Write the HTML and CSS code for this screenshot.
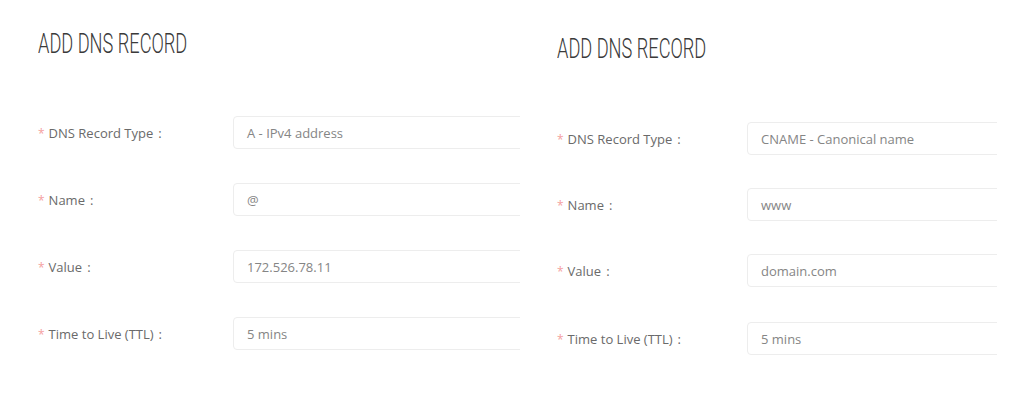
FILE: index.html
```html
<!DOCTYPE html>
<html>
<head>
<meta charset="utf-8">
<link rel="stylesheet" href="styles.css">
</head>
<body>
<div class="page">
  <section class="panel panel-left">
    <h2 class="title">ADD DNS RECORD</h2>
    <div class="form">
      <div class="row"><label class="label"><span class="req">*</span>DNS Record Type<span class="colon">:</span></label><div class="field">A - IPv4 address</div></div>
      <div class="row"><label class="label"><span class="req">*</span>Name<span class="colon">:</span></label><div class="field">@</div></div>
      <div class="row"><label class="label"><span class="req">*</span>Value<span class="colon">:</span></label><div class="field">172.526.78.11</div></div>
      <div class="row"><label class="label"><span class="req">*</span>Time to Live (TTL)<span class="colon">:</span></label><div class="field">5 mins</div></div>
    </div>
  </section>
  <section class="panel panel-right">
    <h2 class="title">ADD DNS RECORD</h2>
    <div class="form">
      <div class="row"><label class="label"><span class="req">*</span>DNS Record Type<span class="colon">:</span></label><div class="field">CNAME - Canonical name</div></div>
      <div class="row"><label class="label"><span class="req">*</span>Name<span class="colon">:</span></label><div class="field">www</div></div>
      <div class="row"><label class="label"><span class="req">*</span>Value<span class="colon">:</span></label><div class="field">domain.com</div></div>
      <div class="row row-last"><label class="label"><span class="req">*</span>Time to Live (TTL)<span class="colon">:</span></label><div class="field">5 mins</div></div>
    </div>
  </section>
</div>
</body>
</html>
```
FILE: styles.css
```css
html, body {
  margin: 0;
  padding: 0;
  background: #fff;
}
.page {
  display: flex;
  width: 1024px;
  height: 400px;
  font-family: "Open Sans", "Noto Sans", sans-serif;
}
.panel {
  overflow: hidden;
  box-sizing: border-box;
}
.panel-left {
  width: 520px;
  padding: 29px 0 0 38px;
}
.panel-right {
  width: 477px;
  padding: 34px 0 0 37px;
}
.title {
  margin: 0;
  font-family: Roboto, sans-serif;
  font-weight: 300;
  font-size: 28px;
  line-height: 30px;
  color: #3a3a3a;
  transform: scaleX(0.65);
  transform-origin: left center;
  white-space: nowrap;
}
.form {
  display: flex;
  flex-direction: column;
  gap: 34px;
  margin-top: 57px;
}
.panel-right .form {
  margin-top: 58px;
  gap: 33px;
}
.panel-right .row-last {
  margin-top: 2px;
}
.row {
  display: flex;
  align-items: center;
  height: 33px;
}
.label {
  width: 195px;
  flex: none;
  font-size: 13px;
  color: #6a6a6a;
  white-space: nowrap;
}
.panel-right .label {
  width: 190px;
}
.req {
  color: #f4a0a0;
  margin-right: 4px;
  font-size: 12px;
}
.colon {
  margin-left: 5px;
}
.field {
  flex: none;
  width: 420px;
  height: 33px;
  box-sizing: border-box;
  border: 1px solid #ededed;
  border-radius: 4px;
  padding: 0 13px;
  display: flex;
  align-items: center;
  font-size: 13px;
  color: #858585;
  white-space: nowrap;
}
```
